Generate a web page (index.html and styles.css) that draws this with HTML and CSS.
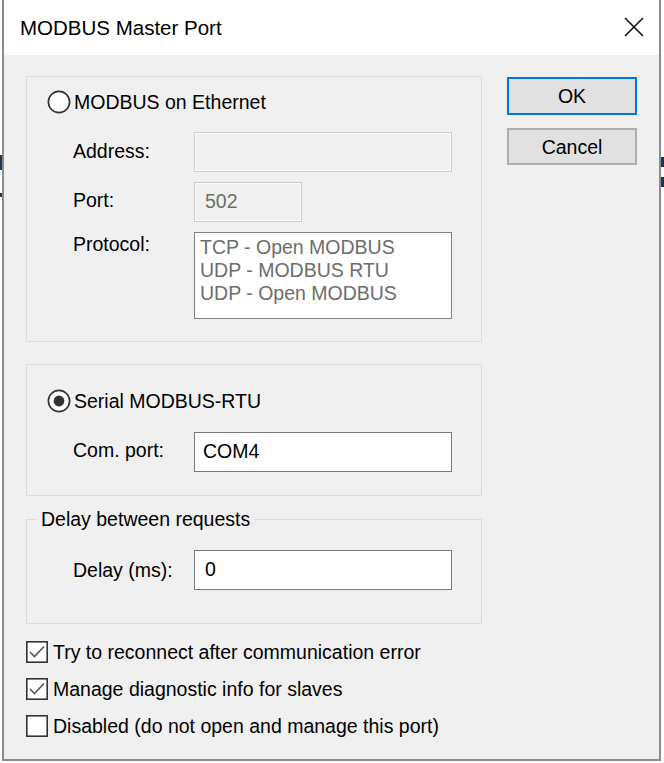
FILE: index.html
```html
<!DOCTYPE html>
<html>
<head>
<meta charset="utf-8">
<title>MODBUS Master Port</title>
<link rel="stylesheet" href="styles.css">
</head>
<body>
<span class="bg-bit bl1"></span>
<span class="bg-bit bl2"></span>
<span class="bg-bit br1"></span>
<span class="bg-bit br2"></span>
<div class="dialog">
  <div class="titlebar">
    <span class="title">MODBUS Master Port</span>
    <svg class="close" width="20" height="20" viewBox="0 0 20 20"><path d="M1 1 L19 19 M19 1 L1 19" stroke="#111" stroke-width="1.6" fill="none"/></svg>
  </div>
  <div class="content">
    <div class="left">
      <div class="group g1">
        <div class="radio-row">
          <svg class="radio" width="24" height="24" viewBox="0 0 24 24"><circle cx="12" cy="12" r="10.6" fill="#fff" stroke="#333" stroke-width="1.7"/></svg>
          <span>MODBUS on Ethernet</span>
        </div>
        <div class="form">
          <span class="label l-addr">Address:</span>
          <div class="field disabled h40"></div>
          <span class="label l-port">Port:</span>
          <div class="field disabled h40 short"><span class="val gray">502</span></div>
          <span class="label l-proto">Protocol:</span>
          <div class="listbox">
            <div>TCP - Open MODBUS</div>
            <div>UDP - MODBUS RTU</div>
            <div>UDP - Open MODBUS</div>
          </div>
        </div>
      </div>
      <div class="group g2">
        <div class="radio-row">
          <svg class="radio" width="24" height="24" viewBox="0 0 24 24"><circle cx="12" cy="12" r="10.6" fill="#fff" stroke="#333" stroke-width="1.7"/><circle cx="12" cy="12" r="5.4" fill="#333"/></svg>
          <span>Serial MODBUS-RTU</span>
        </div>
        <div class="form">
          <span class="label l-com">Com. port:</span>
          <div class="field h40"><span class="val">COM4</span></div>
        </div>
      </div>
      <fieldset class="group g3">
        <legend>Delay between requests</legend>
        <div class="form">
          <span class="label l-delay">Delay (ms):</span>
          <div class="field h40"><span class="val v0">0</span></div>
        </div>
      </fieldset>
      <div class="checks">
        <div class="check-row">
          <svg class="cb" width="22" height="22" viewBox="0 0 22 22"><rect x="0.8" y="0.8" width="20.4" height="20.4" fill="#fff" stroke="#333" stroke-width="1.6"/><path d="M4 11 L8.5 15.5 L18 5.5" stroke="#555" stroke-width="1.6" fill="none"/></svg>
          <span>Try to reconnect after communication error</span>
        </div>
        <div class="check-row">
          <svg class="cb" width="22" height="22" viewBox="0 0 22 22"><rect x="0.8" y="0.8" width="20.4" height="20.4" fill="#fff" stroke="#333" stroke-width="1.6"/><path d="M4 11 L8.5 15.5 L18 5.5" stroke="#555" stroke-width="1.6" fill="none"/></svg>
          <span>Manage diagnostic info for slaves</span>
        </div>
        <div class="check-row">
          <svg class="cb" width="22" height="22" viewBox="0 0 22 22"><rect x="0.8" y="0.8" width="20.4" height="20.4" fill="#fff" stroke="#333" stroke-width="1.6"/></svg>
          <span>Disabled (do not open and manage this port)</span>
        </div>
      </div>
    </div>
    <div class="buttons">
      <div class="btn default">OK</div>
      <div class="btn cancel">Cancel</div>
    </div>
  </div>
</div>
</body>
</html>
```
FILE: styles.css
```css
* { box-sizing: border-box; }
html, body { margin: 0; padding: 0; background: #fff; }
body {
  width: 664px;
  height: 763px;
  overflow: hidden;
  position: relative;
  font-family: "Liberation Sans", Arial, sans-serif;
  font-size: 19.5px;
  line-height: 24px;
  color: #000;
}
.bg-bit { position: absolute; background: #1e3556; }
.bl1 { left: 0; top: 155px; width: 2px; height: 15px; }
.bl2 { left: 0; top: 193px; width: 2px; height: 4px; }
.br1 { left: 661px; top: 157px; width: 3px; height: 10px; }
.br2 { left: 661px; top: 177px; width: 3px; height: 10px; }

.dialog {
  margin-left: 2px;
  width: 659px;
  height: 761px;
  border: 2px solid #8c8c8c;
  border-top: 0;
  display: flex;
  flex-direction: column;
  background: #f0f0f0;
}
.titlebar {
  height: 55px;
  flex: none;
  background: #fff;
  display: flex;
  align-items: center;
  justify-content: space-between;
  padding: 0 15px 0 16px;
}
.title { font-size: 20.5px; }
.close { display: block; margin-top: -1px; }

.content {
  flex: 1;
  display: flex;
  padding: 21px 22px 0 22px;
}
.left { width: 456px; flex: none; }
.buttons { margin-left: 25px; width: 130px; flex: none; padding-top: 1px; }

.group {
  border: 1px solid #dcdcdc;
  margin: 0;
}
.g1 { height: 266px; padding: 13px 0 0 20px; }
.g2 { height: 132px; margin-top: 22px; padding: 24px 0 0 20px; }
.g3 { margin-top: 11px; padding: 0 0 33px 20px; min-width: 0; }
.g3 legend { margin-left: -10px; padding: 0 4px; line-height: 24px; }

.radio-row { display: flex; align-items: center; height: 24px; }
.radio { display: block; margin-right: 3px; }

.form {
  display: grid;
  grid-template-columns: 121px 258px;
  row-gap: 10px;
  margin-left: 26px;
  margin-top: 18px;
  align-items: start;
}
.g2 .form { margin-top: 19px; }
.g3 .form { margin-top: 19px; }

.label { display: block; }
.l-addr { margin-top: 7px; }
.l-port { margin-top: 6px; }
.l-proto { margin-top: 0; }
.l-com { margin-top: 6px; }
.l-delay { margin-top: 8px; }

.field {
  background: #fff;
  border: 1px solid #7a7a7a;
  display: flex;
  align-items: center;
  padding-left: 8px;
}
.h40 { height: 40px; }
.field.disabled {
  background: #f0f0f0;
  border: 1px solid #cccccc;
  box-shadow: inset 0 0 0 1px #fafafa;
  padding-left: 10px;
}
.field.short { width: 108px; }
.val { margin-top: -2px; }
.val.gray { color: #6d6d6d; }
.v0 { padding-left: 2px; }

.listbox {
  height: 87px;
  background: #fff;
  border: 1px solid #828282;
  color: #6d6d6d;
  padding: 3px 0 0 5px;
  line-height: 23px;
}

.checks { padding-top: 9px; }
.check-row { display: flex; align-items: center; height: 37px; }
.cb { display: block; margin-right: 5px; }

.btn {
  display: flex;
  align-items: center;
  justify-content: center;
  background: #e1e1e1;
  border: 2px solid #adadad;
  height: 37px;
}
.btn.default { border-color: #0078d7; height: 38px; }
.btn.cancel { margin-top: 13px; }
```
